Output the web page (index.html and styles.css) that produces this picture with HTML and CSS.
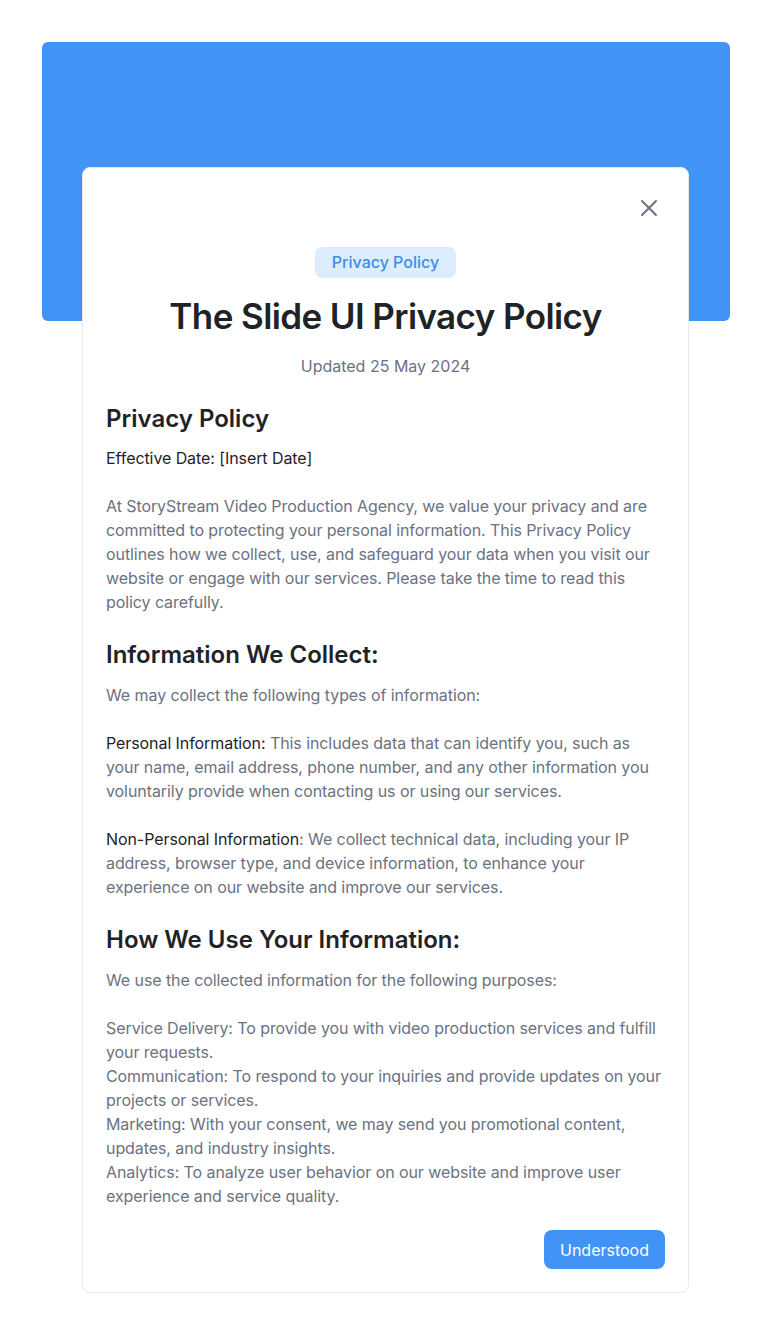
FILE: index.html
```html
<!DOCTYPE html>
<html lang="en">
<head>
<meta charset="utf-8">
<title>Privacy Policy</title>
<link rel="stylesheet" href="styles.css">
</head>
<body>
<div class="page">
  <div class="hero"></div>
  <div class="card">
    <button class="close" aria-label="Close">
      <svg width="20" height="20" viewBox="0 0 20 20" fill="none" stroke="#6b7280" stroke-width="2" stroke-linecap="round"><path d="M3 3 L17 17 M17 3 L3 17"/></svg>
    </button>
    <header class="head">
      <span class="badge">Privacy Policy</span>
      <h1 class="title">The Slide UI Privacy Policy</h1>
      <p class="updated">Updated 25 May 2024</p>
    </header>
    <section class="body">
      <h2 class="h2 first">Privacy Policy</h2>
      <p class="dark">Effective Date: [Insert Date]</p>
      <p class="para">At StoryStream Video Production Agency, we value your privacy and are committed to protecting your personal information. This Privacy Policy outlines how we collect, use, and safeguard your data when you visit our website or engage with our services. Please take the time to read this policy carefully.</p>

      <h2 class="h2">Information We Collect:</h2>
      <p class="text">We may collect the following types of information:</p>
      <p class="para">
        <span class="dark">Personal Information:</span> This includes data that can identify you, such as your name, email address, phone number, and any other information you voluntarily provide when contacting us or using our services.
      </p>
      <p class="para">
        <span class="dark">Non-Personal Information</span>: We collect technical data, including your IP address, browser type, and device information, to enhance your experience on our website and improve our services.
      </p>

      <h2 class="h2">How We Use Your Information:</h2>
      <p class="text">We use the collected information for the following purposes:</p>
      <p class="para">Service Delivery: To provide you with video production services and fulfill your requests.<br>Communication: To respond to your inquiries and provide updates on your projects or services.<br>Marketing: With your consent, we may send you promotional content, updates, and industry insights.<br>Analytics: To analyze user behavior on our website and improve user experience and service quality.</p>
    </section>
    <div class="actions">
      <button class="btn">Understood</button>
    </div>
  </div>
</div>
</body>
</html>
```
FILE: styles.css
```css
* { box-sizing: border-box; }
html, body { margin: 0; padding: 0; background: #ffffff; }
body {
  font-family: Inter, "Noto Sans", "Liberation Sans", sans-serif;
  color: #1f2328;
}
.page {
  width: 688px;
  margin: 42px 0 0 42px;
  padding-bottom: 42px;
}
.hero {
  height: 279px;
  background: #4193f6;
  border-radius: 6px;
}
.card {
  position: relative;
  width: 607px;
  margin: -154px 0 0 40px;
  background: #ffffff;
  border: 1px solid #e7e9ec;
  border-radius: 8px;
  padding: 79px 23px 23px 23px;
}
.close {
  position: absolute;
  top: 30px;
  right: 29px;
  width: 20px;
  height: 20px;
  padding: 0;
  border: 0;
  background: transparent;
  display: flex;
  cursor: pointer;
}
.head {
  display: flex;
  flex-direction: column;
  align-items: center;
}
.badge {
  display: inline-block;
  background: #dcedfd;
  color: #3b8ceb;
  font-size: 16px;
  font-weight: 500;
  line-height: 19px;
  padding: 6px 17px;
  border-radius: 7px;
}
.title {
  margin: 16px 0 0;
  font-size: 35px;
  line-height: 44px;
  font-weight: 600;
  letter-spacing: -0.6px;
  color: #1f2328;
}
.updated {
  margin: 16px 0 0;
  font-size: 16px;
  line-height: 24px;
  color: #6b7280;
}
.body { margin-top: 25px; }
.h2 {
  margin: 25px 0 12px;
  font-size: 24px;
  line-height: 32px;
  font-weight: 600;
  color: #1f2328;
}
.h2.first { margin: 0 0 11px; }
.text, .para, .dark {
  margin: 0;
  font-size: 16px;
  line-height: 24px;
  letter-spacing: -0.08px;
}
.text, .para { color: #6b7280; }
.dark { color: #1f2328; }
.para { margin-top: 24px; }
.actions {
  display: flex;
  justify-content: flex-end;
  margin-top: 22px;
}
.btn {
  font-family: inherit;
  font-size: 16px;
  line-height: 20px;
  color: #ffffff;
  background: #4193f6;
  border: 0;
  border-radius: 8px;
  padding: 10px 16px 9px;
  cursor: pointer;
}
```
